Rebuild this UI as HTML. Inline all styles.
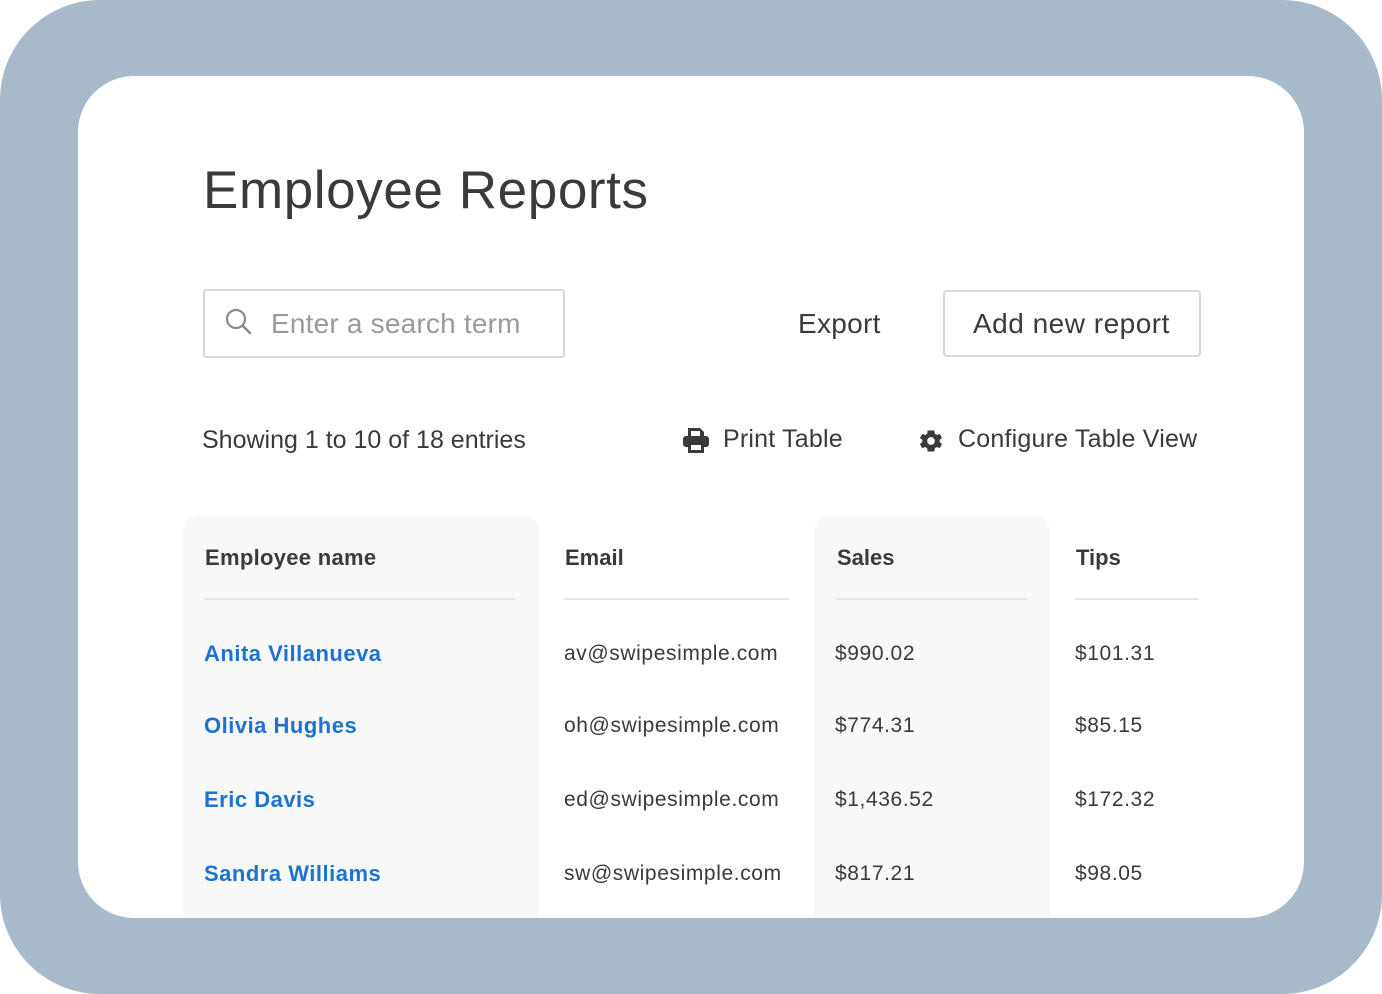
<!DOCTYPE html>
<html><head><style>
*{margin:0;padding:0;box-sizing:border-box}
body{width:1382px;height:994px;background:#fff;font-family:"Liberation Sans",sans-serif;color:#3a3a3c;position:relative;overflow:hidden}
.outer{position:absolute;left:0;top:0;width:1382px;height:994px;background:#a8b9ca;border-radius:100px}
.card{position:absolute;left:78px;top:76px;width:1226px;height:842px;background:#fff;border-radius:56px;overflow:hidden}
.a{position:absolute;white-space:nowrap}
.shade{position:absolute;background:#f8f8f8;border-radius:16px 16px 0 0;top:439px;height:420px}
.hl{position:absolute;height:2px;background:#e6e6e6;top:522px}
.name{color:#1a73d1;font-weight:bold;font-size:22px;letter-spacing:0.5px}
.c{font-size:21px;color:#3a3a3c;letter-spacing:0.6px}
</style></head><body>
<div class="outer"></div>
<div class="card">
<div class="a" style="left:125px;top:84px;font-size:53px;color:#3a3a3c;letter-spacing:0.6px">Employee Reports</div>
<div class="a" style="left:125px;top:213px;width:362px;height:69px;border:2px solid #d6d6d6;border-radius:3px"></div>
<svg class="a" style="left:146px;top:231px" width="30" height="30" viewBox="0 0 30 30"><circle cx="12" cy="12" r="9" fill="none" stroke="#8a8a8a" stroke-width="2.2"/><line x1="18.5" y1="18.5" x2="26" y2="26" stroke="#8a8a8a" stroke-width="2.4" stroke-linecap="round"/></svg>
<div class="a" style="left:193px;top:232px;font-size:28px;color:#9a9a9a;letter-spacing:0.2px">Enter a search term</div>
<div class="a" style="left:720px;top:232px;font-size:28px;letter-spacing:0.3px">Export</div>
<div class="a" style="left:865px;top:214px;width:258px;height:67px;border:2px solid #d6d6d6;border-radius:4px"></div>
<div class="a" style="left:895px;top:232px;font-size:28px;letter-spacing:0.5px">Add new report</div>
<div class="a" style="left:124px;top:350px;font-size:25px">Showing 1 to 10 of 18 entries</div>
<svg class="a" style="left:604px;top:350px" width="28" height="28" viewBox="0 0 28 28"><path d="M6 2h12l4 4v6H6z" fill="#3a3a3c"/><rect x="1" y="10" width="26" height="11" rx="3" fill="#3a3a3c"/><rect x="6" y="17" width="16" height="10" fill="#3a3a3c"/><rect x="9" y="19" width="10" height="5" fill="#fff"/><rect x="9" y="5" width="9" height="5" fill="#fff"/></svg>
<div class="a" style="left:645px;top:349px;font-size:25px;letter-spacing:0.2px">Print Table</div>
<svg class="a" style="left:839px;top:351px" width="28" height="28" viewBox="0 0 24 24"><path fill="#3a3a3c" d="M19.4 13a7.5 7.5 0 000-2l2.1-1.6-2-3.5-2.5 1a7 7 0 00-1.7-1L14.9 3h-5.8l-.4 2.9a7 7 0 00-1.7 1l-2.5-1-2 3.5L4.6 11a7.5 7.5 0 000 2l-2.1 1.6 2 3.5 2.5-1a7 7 0 001.7 1l.4 2.9h5.8l.4-2.9a7 7 0 001.7-1l2.5 1 2-3.5zM12 15.3a3.3 3.3 0 110-6.6 3.3 3.3 0 010 6.6z"/></svg>
<div class="a" style="left:880px;top:349px;font-size:25px;letter-spacing:0.2px">Configure Table View</div>
<div class="shade" style="left:105px;width:356px"></div>
<div class="shade" style="left:736px;width:236px"></div>
<div class="a" style="left:127px;top:469px;font-size:22px;font-weight:bold;letter-spacing:0.3px">Employee name</div>
<div class="a" style="left:487px;top:469px;font-size:22px;font-weight:bold">Email</div>
<div class="a" style="left:759px;top:469px;font-size:22px;font-weight:bold">Sales</div>
<div class="a" style="left:998px;top:469px;font-size:22px;font-weight:bold">Tips</div>
<div class="hl" style="left:126px;width:311px"></div>
<div class="hl" style="left:486px;width:225px"></div>
<div class="hl" style="left:757px;width:192px"></div>
<div class="hl" style="left:997px;width:124px"></div>
<div class="a name" style="left:126px;top:565px">Anita Villanueva</div>
<div class="a c" style="left:486px;top:566px">av@swipesimple.com</div>
<div class="a c" style="left:757px;top:566px">$990.02</div>
<div class="a c" style="left:997px;top:566px">$101.31</div>
<div class="a name" style="left:126px;top:637px">Olivia Hughes</div>
<div class="a c" style="left:486px;top:638px">oh@swipesimple.com</div>
<div class="a c" style="left:757px;top:638px">$774.31</div>
<div class="a c" style="left:997px;top:638px">$85.15</div>
<div class="a name" style="left:126px;top:711px">Eric Davis</div>
<div class="a c" style="left:486px;top:712px">ed@swipesimple.com</div>
<div class="a c" style="left:757px;top:712px">$1,436.52</div>
<div class="a c" style="left:997px;top:712px">$172.32</div>
<div class="a name" style="left:126px;top:785px">Sandra Williams</div>
<div class="a c" style="left:486px;top:786px">sw@swipesimple.com</div>
<div class="a c" style="left:757px;top:786px">$817.21</div>
<div class="a c" style="left:997px;top:786px">$98.05</div>
</div>
</body></html>
